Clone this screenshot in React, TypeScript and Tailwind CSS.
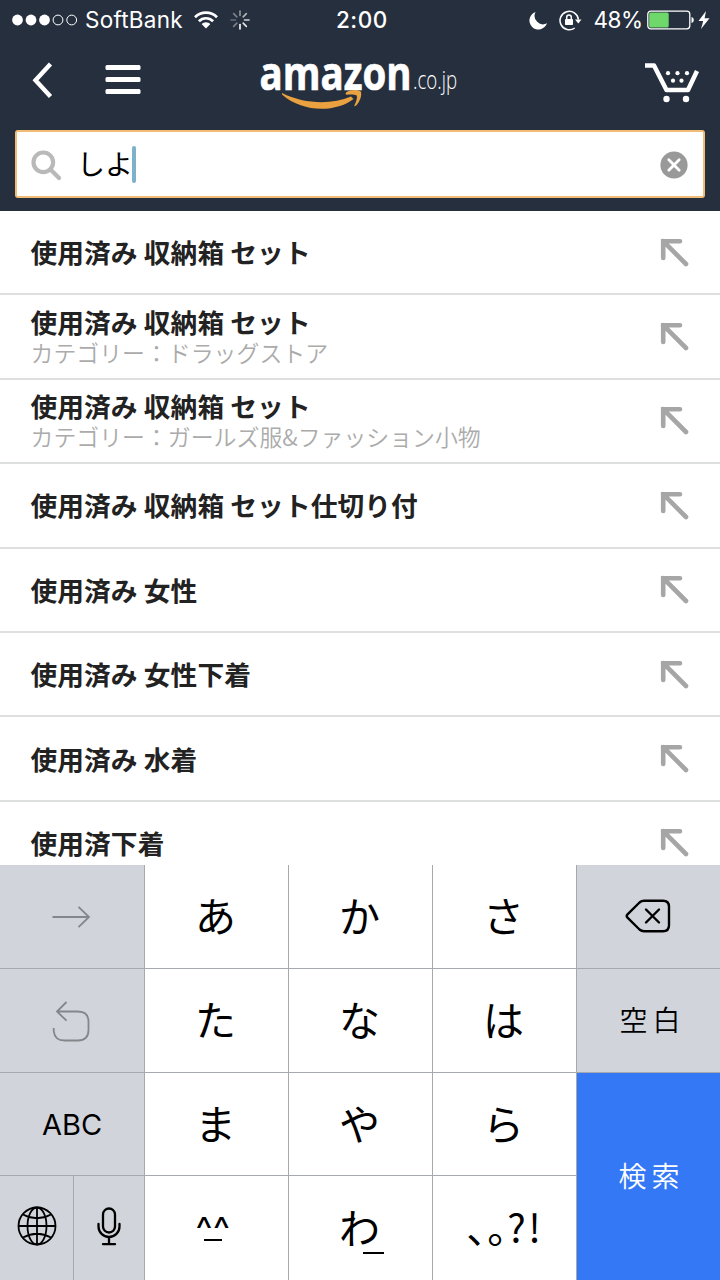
import React from 'react';

const JP = "font-['Noto_Sans_CJK_JP',sans-serif]";

type Suggestion = { text: string; category?: string };

const suggestions: Suggestion[] = [
  { text: '使用済み 収納箱 セット' },
  { text: '使用済み 収納箱 セット', category: 'カテゴリー：ドラッグストア' },
  { text: '使用済み 収納箱 セット', category: 'カテゴリー：ガールズ服&ファッション小物' },
  { text: '使用済み 収納箱 セット仕切り付' },
  { text: '使用済み 女性' },
  { text: '使用済み 女性下着' },
  { text: '使用済み 水着' },
  { text: '使用済下着' },
];

function StatusBar() {
  return (
    <div className="flex h-10 items-center text-white font-['Inter',sans-serif]">
      <svg width="66" height="12" viewBox="0 0 66 12" className="ml-3 shrink-0">
        {[5.5, 19, 32.5].map((x) => (
          <circle key={x} cx={x} cy="6" r="5.4" fill="#fff" />
        ))}
        {[46, 59.7].map((x) => (
          <circle key={x} cx={x} cy="6" r="4.9" fill="none" stroke="#fff" strokeWidth="1" />
        ))}
      </svg>
      <span className="ml-[7px] w-[99px] whitespace-nowrap text-[22.5px] leading-10 tracking-[0.25px]">SoftBank</span>
      <svg width="24" height="18" viewBox="0 0 24 18" className="ml-[10px] shrink-0" fill="none" stroke="#fff" strokeWidth="2.7">
        <path d="M1 6.2a15.6 15.6 0 0 1 22 0" />
        <path d="M4.9 10.2a10 10 0 0 1 14.2 0" />
        <path d="M12 17.4 7.6 13a6.3 6.3 0 0 1 8.8 0z" fill="#fff" stroke="none" />
      </svg>
      <svg width="20" height="20" viewBox="0 0 20 20" className="ml-3 shrink-0" stroke="#fff" strokeWidth="1.6" strokeLinecap="round">
        {[0.5, 0.65, 0.8, 0.9, 1, 0.4, 0.3, 0.4].map((o, i) => (
          <line key={i} x1="10" y1="1" x2="10" y2="5.5" opacity={o} transform={`rotate(${i * 45} 10 10)`} />
        ))}
      </svg>
      <span className="ml-[86px] w-[54px] whitespace-nowrap text-[22.5px] font-medium leading-10 tracking-[0.5px]">2:00</span>
      <svg width="19" height="19" viewBox="0 0 19 19" className="ml-[138.5px] shrink-0" fill="#fff">
        <path d="M6.5 1A9 9 0 1 0 18 12.3 8.5 8.5 0 0 1 6.5 1Z" />
      </svg>
      <svg width="23" height="21" viewBox="0 0 23 21" className="ml-[11px] shrink-0" fill="none" stroke="#fff" strokeWidth="1.5">
        <path d="M15.7 18A9.2 9.2 0 1 1 19.4 9.600" />
        <path d="M16 9.5h6.5l-3.2 4z" fill="#fff" stroke="none" />
        <rect x="6" y="9" width="8" height="6" rx=".7" fill="#fff" stroke="none" />
        <path d="M7.7 9.5V7.3a2.3 2.3 0 0 1 4.6 0v2.2" />
      </svg>
      <span className="ml-[12px] w-[53px] whitespace-nowrap text-[22.5px] leading-10 -tracking-[0.5px]">48%</span>
      <svg width="48" height="20" viewBox="0 0 48 20" className="shrink-0">
        <rect x=".8" y="1.2" width="42" height="17.6" rx="3" fill="none" stroke="#fff" strokeWidth="1.3" />
        <rect x="2.2" y="2.6" width="19.5" height="14.8" rx="1.5" fill="#6fd86b" />
        <path d="M44.5 7c3 .5 3 5.5 0 6z" fill="#fff" />
      </svg>
      <svg width="12" height="18" viewBox="0 0 12 18" className="ml-[3px] shrink-0" fill="#fff">
        <path d="M8 0 .5 10h4.7L3 18 11.5 7.2H6.600z" />
      </svg>
    </div>
  );
}

function NavBar() {
  return (
    <div className="flex h-[90px] items-start">
      <svg width="22" height="36" viewBox="0 0 22 36" className="ml-8 mt-[22px] shrink-0" fill="none" stroke="#fff" strokeWidth="4.400">
        <path d="M18.500 2 3.500 18.300 18.500 34.500" />
      </svg>
      <svg width="36" height="30" viewBox="0 0 36 30" className="ml-[51px] mt-[25px] shrink-0" fill="#fff">
        <rect x=".5" y="0" width="35" height="5" rx="1.5" />
        <rect x=".5" y="12.1" width="35" height="5" rx="1.5" />
        <rect x=".5" y="24" width="35" height="5" rx="1.5" />
      </svg>
      <svg width="204" height="77" viewBox="0 -21 204 77" className="-mt-[6px] ml-[117px] shrink-0">
        <text x="1.500" y="34.500" textLength="152" lengthAdjust="spacingAndGlyphs" fill="#fff" fontFamily="Open Sans" fontSize="46" fontWeight="700" stroke="#fff" strokeWidth=".7">amazon</text>
        <text x="155" y="34.300" textLength="44" lengthAdjust="spacingAndGlyphs" fill="#fff" fontFamily="Open Sans" fontSize="25" fontWeight="300">.co.jp</text>
        <path d="M24 38C46 49 73 50 93 41.500l2.500 2.500C78 57.500 45 58 24 39.500Z" fill="#e9a23f" />
        <path d="M88 37.5c5-3.2 12-3 15-.8 1 4.5-1.5 11-5.5 14.3-.8.4-1.5 0-1-.8 1.8-3.7 3-7.8 2.200-9.700-2.500-1.300-6.500-1-10-.7-.8 0-1.500-1.500-.7-2.300Z" fill="#e9a23f" />
      </svg>
      <svg width="56" height="42" viewBox="0 0 56 42" className="ml-[182px] mt-[22px] shrink-0">
        <path d="M1 3.5h9L22.5 28H44L53 9" fill="none" stroke="#fff" strokeWidth="4.500" strokeLinejoin="round" />
        <g fill="#fff">
          <circle cx="22.5" cy="37" r="3.2" />
          <circle cx="42" cy="37" r="3.2" />
          {[24, 33.5, 43].map((x) => (
            <circle key={x} cx={x} cy="11.2" r="2.1" />
          ))}
          <circle cx="29" cy="18.7" r="2.1" />
          <circle cx="37.5" cy="18.7" r="2.1" />
        </g>
      </svg>
    </div>
  );
}

function SearchField() {
  return (
    <div className="mx-[15px] flex h-[68px] items-center rounded-[3px] border-2 border-[#f3bc75] bg-white">
      <svg width="32" height="32" viewBox="0 0 32 32" className="ml-[13px] mt-px shrink-0" fill="none" stroke="#b9b9b9">
        <circle cx="13.3" cy="13.3" r="9.8" strokeWidth="4.2" />
        <path d="m20.5 20.5 8.5 8.5" strokeWidth="4.2" strokeLinecap="round" />
      </svg>
      <span className={`${JP} -mt-[3px] ml-[15px] w-[55px] whitespace-nowrap text-[28px] font-normal leading-[60px] text-black`}>しよ</span>
      <span className="h-[37px] w-[3.5px] rounded-sm bg-[#7eb2ca]" />
      <svg width="28" height="28" viewBox="0 0 28 28" className="ml-auto mr-[15px] mt-0.5 shrink-0">
        <circle cx="14" cy="14" r="13.6" fill="#999" />
        <path d="m8.8 8.8 10.4 10.4m0-10.4L8.8 19.2" stroke="#fff" strokeWidth="2.8" strokeLinecap="round" />
      </svg>
    </div>
  );
}

function SuggestionRow({ text, category }: Suggestion) {
  return (
    <li className="flex h-[84.4px] shrink-0 items-center border-b-2 border-[#dedfdf] pl-[30.5px] pr-[31px]">
      <div className={`${JP} flex flex-1 flex-col whitespace-nowrap`}>
        <span className="text-[26.7px] font-bold leading-[30px] tracking-[0.1px] text-[#222]">{text}</span>
        {category && <span className="text-[22.9px] font-[350] leading-[30px] text-[#ababab]">{category}</span>}
      </div>
      <svg width="29" height="29" viewBox="0 0 29 29" className="shrink-0" fill="none" stroke="#a6a6a6" strokeWidth="4.600" strokeLinecap="round">
        <path d="M3.200 20V3.200H20M3.200 3.200 26 26" />
      </svg>
    </li>
  );
}

function Key({ children, className }: { children: React.ReactNode; className: string }) {
  return <div className={`flex items-center justify-center border-[#a5a8ac] ${className}`}>{children}</div>;
}

function Kana({ children }: { children: string }) {
  return (
    <Key className={`${JP} border-r border-b bg-white pb-1 pr-0.5 text-[41px] font-normal text-black`}>
      {children}
    </Key>
  );
}

const kanaLast = `${JP} border-r bg-white pr-0.5 pb-1 text-[41px] font-normal text-black`;
const side = 'border-b bg-[#d1d5db]';

function Keyboard() {
  return (
    <div className="grid h-[415px] grid-cols-[145px_144px_144px_144px_143px] grid-rows-[104px_104px_103px_104px] leading-none">
      <Key className={`border-r ${side}`}>
        <svg width="40" height="24" viewBox="0 0 40 24" className="mr-0.5" fill="none" stroke="#83868a" strokeWidth="1.8">
          <path d="M1.5 12H38M27.5 1.8 38 12 27.5 22.2" />
        </svg>
      </Key>
      <Kana>あ</Kana>
      <Kana>か</Kana>
      <Kana>さ</Kana>
      <Key className={side}>
        <svg width="46" height="34" viewBox="0 0 46 34" className="mb-px mr-0.5" fill="none" stroke="#000" strokeWidth="2.4" strokeLinejoin="round">
          <path d="M2.5 15.3 14.5 3.5q2-1.8 4.5-1.8h19q6 0 6 6v18.6q0 6-6 6H19q-2.5 0-4.5-1.8L2.5 18.7q-1.7-1.700 0-3.400ZM21 10.500l13 13m0-13-13 13" strokeLinecap="round" />
        </svg>
      </Key>

      <Key className={`border-r ${side}`}>
        <svg width="40" height="42" viewBox="0 0 40 42" fill="none" stroke="#83868a" strokeWidth="1.8">
          <path d="M1.7 28v3q1 9.500 11 9.500h13Q36.500 40.500 36.500 30v-8q0-10.500-11-10.500H5M14.500 2 5 11.500l9.500 9.200" />
        </svg>
      </Key>
      <Kana>た</Kana>
      <Kana>な</Kana>
      <Kana>は</Kana>
      <Key className={`${side} ${JP} pb-1 text-[28px] font-[350] text-black`}>
        <span className="pl-2 tracking-[5px]">空白</span>
      </Key>

      <Key className={`border-r ${side} text-[29px] text-black font-['Inter',sans-serif]`}>ABC</Key>
      <Kana>ま</Kana>
      <Kana>や</Kana>
      <Kana>ら</Kana>
      <Key className={`${JP} row-span-2 bg-[#3478f6] pb-1 text-[28px] font-[350] text-white`}>
        <span className="pl-1.5 tracking-[5px]">検索</span>
      </Key>

      <div className="flex border-r border-[#a5a8ac] bg-[#d1d5db]">
        <Key className="w-[74px] border-r pb-1">
          <svg width="40" height="40" viewBox="0 0 40 40" fill="none" stroke="#000" strokeWidth="1.8">
            <circle cx="20" cy="20" r="18.500" />
            <ellipse cx="20" cy="20" rx="9.500" ry="18.500" />
            <path d="M20 1.5v37M1.5 20h37M6 8.5q14 7.500 28 0M6 31.500q14-7.500 28 0" />
          </svg>
        </Key>
        <Key className="flex-1 pb-1">
          <svg width="24" height="39" viewBox="0 0 24 39" fill="none" stroke="#000" strokeWidth="2.3" strokeLinecap="round">
            <rect x="6" y="1.5" width="12" height="24" rx="6" />
            <path d="M1.5 17v2.5a10.5 10.5 0 0 0 21 0V17M12 30v7M6 37.200h12" />
          </svg>
        </Key>
      </div>
      <Key className={`${kanaLast} pr-[7px]`}>
        <div className="flex flex-col items-center font-['Inter',sans-serif]">
          <span className="h-[23px] text-[36px] leading-[36px] tracking-[0.5px]">^^</span>
          <span className="mt-[5px] h-[2.5px] w-[18px] bg-black" />
        </div>
      </Key>
      <Key className={kanaLast}>
        <span className="relative">
          わ
          <span className="absolute -bottom-[7px] left-[24px] h-[2px] w-[21px] bg-black" />
        </span>
      </Key>
      <Key className={kanaLast}>
        <span className="flex items-center">
          <span className="w-[21px] overflow-hidden text-[40px]">、</span>
          <span className="w-[20px] overflow-hidden text-[40px]">。</span>
          <span className="w-[21px] text-[39px]">?</span>
          <span className="text-[39px]">!</span>
        </span>
      </Key>
    </div>
  );
}

export default function App() {
  return (
    <div className="flex h-[1280px] w-[720px] flex-col overflow-hidden bg-white">
      <header className="h-[211px] shrink-0 bg-[#262f3e]">
        <StatusBar />
        <NavBar />
        <SearchField />
      </header>
      <ul className="flex h-[654px] shrink-0 flex-col overflow-hidden bg-white">
        {suggestions.map((s, i) => (
          <SuggestionRow key={i} {...s} />
        ))}
      </ul>
      <Keyboard />
    </div>
  );
}
